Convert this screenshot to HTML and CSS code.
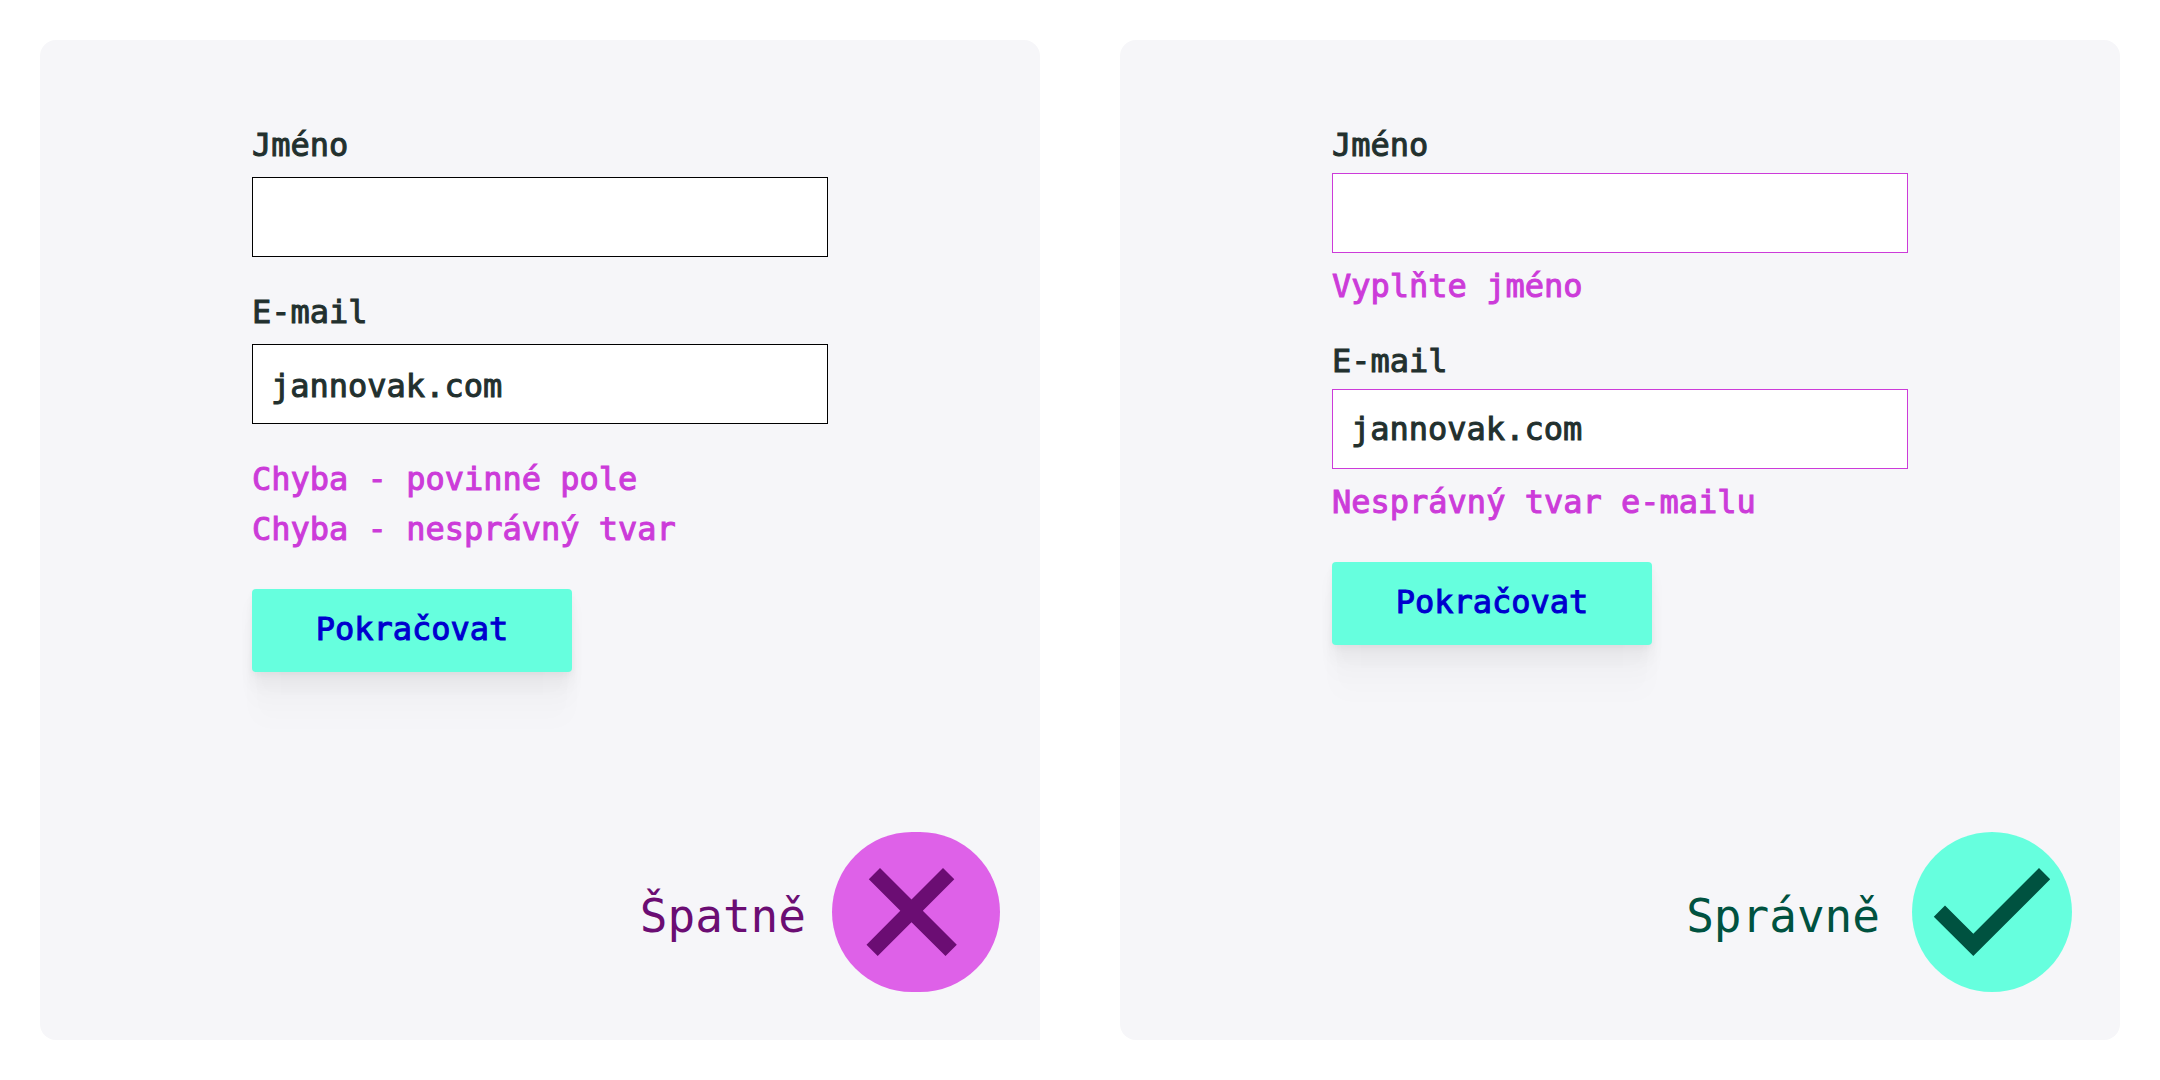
FILE: index.html
```html
<!DOCTYPE html>
<html lang="cs">
<head>
  <meta charset="utf-8">
  <meta name="viewport" content="width=device-width, initial-scale=1">
  <title>Chybové hlášky ve formuláři</title>
  <link rel="stylesheet" href="styles.css">
</head>
<body>
  <main class="comparison">
    <section class="card card--bad">
      <form class="form" novalidate>
        <div class="field">
          <label class="field__label" for="bad-name">Jméno</label>
          <input class="field__input" id="bad-name" type="text">
        </div>
        <div class="field">
          <label class="field__label" for="bad-email">E-mail</label>
          <input class="field__input" id="bad-email" type="text" value="jannovak.com">
        </div>
        <div class="errors">
          <p class="error">Chyba - povinné pole</p>
          <p class="error">Chyba - nesprávný tvar</p>
        </div>
        <button class="button" type="button">Pokračovat</button>
      </form>
      <div class="verdict verdict--bad">
        <span class="verdict__text">Špatně</span>
        <svg class="verdict__icon" width="168" height="160" viewBox="0 0 168 160" aria-hidden="true">
          <rect class="verdict__disc" width="168" height="160" rx="80" ry="80"/>
          <path class="verdict__mark" d="M48 36 79.500 67.500 111 36 122.300 47.300 90.800 78.800 124.800 112.800 113.500 124 79.500 90.200 45.700 124 34.500 112.800 68.300 78.800 36.800 47.300Z"/>
        </svg>
      </div>
    </section>

    <section class="card card--good">
      <form class="form" novalidate>
        <div class="field">
          <label class="field__label" for="good-name">Jméno</label>
          <input class="field__input" id="good-name" type="text" aria-invalid="true" aria-describedby="good-name-error">
          <p class="error" id="good-name-error">Vyplňte jméno</p>
        </div>
        <div class="field">
          <label class="field__label" for="good-email">E-mail</label>
          <input class="field__input" id="good-email" type="text" value="jannovak.com" aria-invalid="true" aria-describedby="good-email-error">
          <p class="error" id="good-email-error">Nesprávný tvar e-mailu</p>
        </div>
        <button class="button" type="button">Pokračovat</button>
      </form>
      <div class="verdict verdict--good">
        <span class="verdict__text">Správně</span>
        <svg class="verdict__icon" width="160" height="160" viewBox="0 0 160 160" aria-hidden="true">
          <circle class="verdict__disc" cx="80" cy="80" r="80"/>
          <path class="verdict__mark" d="M33 73.500 61.300 101.800 127 36 138.200 47.300 61.300 124 21.800 84.700Z"/>
        </svg>
      </div>
    </section>
  </main>
</body>
</html>
```
FILE: styles.css
```css
* {
  box-sizing: border-box;
}

body {
  margin: 0;
  background: #fff;
  color: #22302e;
  font-family: "DejaVu Sans Mono", "Liberation Mono", monospace;
  font-size: 32px;
  line-height: 50px;
}

.comparison {
  display: grid;
  grid-template-columns: 1fr 1fr;
  gap: 80px;
  min-height: 100vh;
  padding: 40px;
}

.card {
  display: flex;
  flex-direction: column;
  justify-content: space-between;
  gap: 40px;
  min-width: 0;
  padding: 80px 40px 48px;
  border-radius: 16px;
  background: #f6f6f9;
}

.card--bad {
  border-bottom-right-radius: 0;
}

.card--good {
  padding-right: 48px;
  padding-left: 48px;
}

/* The outline gives the form texts a medium weight. */
.form {
  display: flex;
  flex-direction: column;
  gap: 30px;
  width: 100%;
  max-width: 576px;
  margin: 0 auto;
  -webkit-text-stroke: 1px currentColor;
}

.card--good .form {
  gap: 25px;
}

.field {
  display: flex;
  flex-direction: column;
  gap: 7px;
}

.card--good .field {
  gap: 3px;
}

.field__input {
  width: 100%;
  height: 80px;
  padding: 3px 18px 0;
  border: 1px solid #000;
  border-radius: 0;
  outline: 0;
  background: #fff;
  color: inherit;
  font: inherit;
}

.card--good .field__input {
  padding-top: 0;
  border-color: #cc3bd9;
}

.error {
  margin: 0;
  color: #cc3bd9;
}

.field .error {
  margin-top: 5px;
}

.button {
  align-self: flex-start;
  width: 320px;
  max-width: 100%;
  margin-top: 5px;
  padding: 15px 16px 18px;
  border: 0;
  border-radius: 4px;
  background: #66ffde;
  box-shadow:
    0 3px 7px rgba(0, 0, 0, 0.04),
    0 13px 16px rgba(0, 0, 0, 0.04),
    0 30px 22px rgba(0, 0, 0, 0.02),
    0 52px 24px rgba(0, 0, 0, 0.01);
  color: #0000ce;
  font: inherit;
  cursor: pointer;
}

.card--good .button {
  margin-top: 10px;
}

.verdict {
  display: flex;
  align-items: center;
  justify-content: flex-end;
  gap: 26px;
  font-size: 46px;
}

.verdict__text {
  padding-top: 8px;
}

.verdict__icon {
  display: block;
  flex: none;
}

.verdict--bad {
  color: #6b0d73;
}

.verdict--bad .verdict__disc {
  fill: #de61e8;
}

.verdict--good {
  gap: 32px;
  color: #005240;
}

.verdict--good .verdict__disc {
  fill: #66ffde;
}

.verdict__mark {
  fill: currentColor;
}
```
